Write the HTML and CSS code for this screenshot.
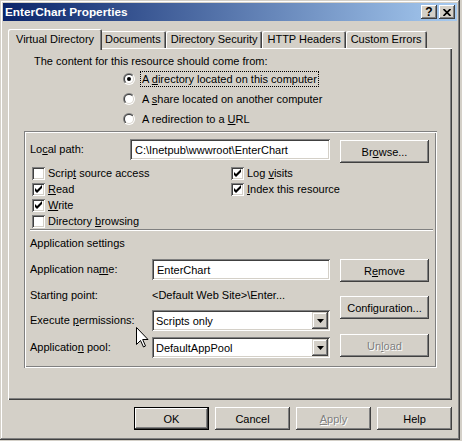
FILE: index.html
```html
<!DOCTYPE html>
<html lang="en">
<head>
  <meta charset="UTF-8">
  <meta name="viewport" content="width=device-width, initial-scale=1.0">
  <title>EnterChart Properties</title>
  <link rel="stylesheet" href="styles.css">
</head>
<body>
  <div class="dialog">
    <div class="titlebar">
      <span class="title">EnterChart Properties</span>
      <span class="capbtn">?</span>
      <span class="capbtn close">
        <svg width="8" height="7" viewBox="0 0 8 7"><path d="M0.5 0 L7.5 7 M7.5 0 L0.5 7" stroke="#000" stroke-width="1.7"/></svg>
      </span>
    </div>

    <div class="dialog-body">
      <div class="tabs">
        <div class="tab active">Virtual Directory</div>
        <div class="tab">Documents</div>
        <div class="tab">Directory Security</div>
        <div class="tab">HTTP Headers</div>
        <div class="tab">Custom Errors</div>
      </div>

      <div class="page">
        <p class="intro">The content for this resource should come from:</p>
        <div class="radios">
          <div class="radio-row">
            <svg class="radio" width="12" height="12" viewBox="0 0 12 12">
              <defs>
                <linearGradient id="outer" x1="0" y1="0" x2="1" y2="1"><stop offset="0.5" stop-color="#808080"/><stop offset="0.5" stop-color="#fff"/></linearGradient>
                <linearGradient id="inner" x1="0" y1="0" x2="1" y2="1"><stop offset="0.5" stop-color="#404040"/><stop offset="0.5" stop-color="#d4d0c8"/></linearGradient>
              </defs>
              <circle cx="6" cy="6" r="6" fill="url(#outer)"/>
              <circle cx="6" cy="6" r="5" fill="url(#inner)"/>
              <circle cx="6" cy="6" r="4" fill="#fff"/>
              <circle cx="6" cy="6" r="2" fill="#000"/>
            </svg>
            <span class="focus">A <u>d</u>irectory located on this computer</span>
          </div>
          <div class="radio-row">
            <svg class="radio" width="12" height="12" viewBox="0 0 12 12">
              <circle cx="6" cy="6" r="6" fill="url(#outer)"/>
              <circle cx="6" cy="6" r="5" fill="url(#inner)"/>
              <circle cx="6" cy="6" r="4" fill="#fff"/>
            </svg>
            <span class="radio-label">A <u>s</u>hare located on another computer</span>
          </div>
          <div class="radio-row">
            <svg class="radio" width="12" height="12" viewBox="0 0 12 12">
              <circle cx="6" cy="6" r="6" fill="url(#outer)"/>
              <circle cx="6" cy="6" r="5" fill="url(#inner)"/>
              <circle cx="6" cy="6" r="4" fill="#fff"/>
            </svg>
            <span class="radio-label">A redirection to a <u>U</u>RL</span>
          </div>
        </div>

        <div class="group">
          <div class="path-row">
            <span class="lbl path-lbl">Lo<u>c</u>al path:</span>
            <div class="edit path-edit">C:\Inetpub\wwwroot\EnterChart</div>
            <button class="btn side-btn">Br<u>o</u>wse...</button>
          </div>

          <div class="checks">
            <div class="check"><span class="box"></span><span>Scrip<u>t</u> source access</span></div>
            <div class="check"><span class="box on"><svg width="13" height="13" viewBox="0 0 13 13"><polygon points="3,5 5,7 10,2 10,5 5,10 3,8"/></svg></span><span>Log <u>v</u>isits</span></div>
            <div class="check"><span class="box on"><svg width="13" height="13" viewBox="0 0 13 13"><polygon points="3,5 5,7 10,2 10,5 5,10 3,8"/></svg></span><span><u>R</u>ead</span></div>
            <div class="check"><span class="box on"><svg width="13" height="13" viewBox="0 0 13 13"><polygon points="3,5 5,7 10,2 10,5 5,10 3,8"/></svg></span><span><u>I</u>ndex this resource</span></div>
            <div class="check"><span class="box on"><svg width="13" height="13" viewBox="0 0 13 13"><polygon points="3,5 5,7 10,2 10,5 5,10 3,8"/></svg></span><span><u>W</u>rite</span></div>
            <div></div>
            <div class="check"><span class="box"></span><span>Directory <u>b</u>rowsing</span></div>
          </div>

          <div class="sep"></div>
          <div class="section">Application settings</div>

          <div class="app">
            <div class="app-fields">
              <div class="field-row">
                <span class="lbl app-lbl">Application na<u>m</u>e:</span>
                <div class="edit app-edit">EnterChart</div>
              </div>
              <div class="field-row start-row">
                <span class="lbl app-lbl">Starting point:</span>
                <span>&lt;Default Web Site&gt;\Enter...</span>
              </div>
              <div class="field-row exec-row">
                <span class="lbl app-lbl">Execute <u>p</u>ermissions:</span>
                <div class="combo">
                  <span class="combo-text">Scripts only</span>
                  <span class="drop"><svg width="7" height="4" viewBox="0 0 7 4"><polygon points="0,0 7,0 3.5,4"/></svg></span>
                </div>
              </div>
              <div class="field-row pool-row">
                <span class="lbl app-lbl">Applicatio<u>n</u> pool:</span>
                <div class="combo">
                  <span class="combo-text">DefaultAppPool</span>
                  <span class="drop"><svg width="7" height="4" viewBox="0 0 7 4"><polygon points="0,0 7,0 3.5,4"/></svg></span>
                </div>
              </div>
            </div>
            <div class="app-buttons">
              <button class="btn side-btn">R<u>e</u>move</button>
              <button class="btn side-btn config-btn">Configuration...</button>
              <button class="btn side-btn unload-btn" disabled>Un<u>l</u>oad</button>
            </div>
          </div>
        </div>
      </div>

      <div class="actions">
        <button class="btn action default">OK</button>
        <button class="btn action">Cancel</button>
        <button class="btn action" disabled><u>A</u>pply</button>
        <button class="btn action">Help</button>
      </div>
    </div>

    <!-- mouse pointer resting over the form -->
    <svg class="pointer" width="13" height="21" viewBox="0 0 13 21">
      <path d="M0.5 0.5 L0.5 17.5 L4.5 13.5 L7.5 20 L9.5 19 L6.7 12.5 L12 12.5 Z" fill="#fff" stroke="#000" stroke-width="1"/>
    </svg>
  </div>
</body>
</html>
```

FILE: styles.css
```css
body {
  margin: 0;
  background-color: #d4d0c8;
  font-family: "Liberation Sans", Arial, sans-serif;
  font-size: 11px;
  color: #000;
}
u {
  text-underline-offset: 1px;
}
.dialog {
  position: relative;
  width: 460px;
  height: 440px;
  box-sizing: border-box;
  padding: 3px;
  background-color: #d4d0c8;
  box-shadow: inset -1px -1px #404040, inset 1px 1px #d4d0c8, inset -2px -2px #808080, inset 2px 2px #fff;
}

/* caption */
.titlebar {
  display: flex;
  align-items: center;
  height: 18px;
  padding: 0 2px;
  background: linear-gradient(to right, #0a246a, #a6caf0);
}
.title {
  flex: 1;
  color: #fff;
  font-weight: bold;
  font-size: 11.8px;
}
.capbtn {
  display: flex;
  align-items: center;
  justify-content: center;
  width: 16px;
  height: 14px;
  margin-left: 2px;
  font-weight: bold;
  font-size: 12px;
  background-color: #d4d0c8;
  box-shadow: inset -1px -1px #404040, inset 1px 1px #fff, inset -2px -2px #808080;
}

.dialog-body {
  padding: 8px 5px 0 5px;
}

/* tabs */
.tabs {
  display: flex;
  align-items: flex-end;
  height: 19px;
  padding-left: 2px;
}
.tab {
  height: 17px;
  line-height: 17px;
  padding: 0 5px;
  border-radius: 2px 2px 0 0;
  box-shadow: inset 1px 1px #fff, inset -1px 0 #404040, inset -2px 0 #808080;
}
.tab.active {
  position: relative;
  z-index: 1;
  height: 21px;
  line-height: 15px;
  box-sizing: border-box;
  padding: 3px 8px 0;
  margin: 0 -2px -2px;
  background-color: #d4d0c8;
}

/* property page */
.page {
  width: 444px;
  height: 352px;
  box-sizing: border-box;
  padding-top: 6px;
  box-shadow: inset 1px 1px #fff, inset -1px -1px #404040, inset -2px -2px #808080;
}
.intro {
  margin: 0 0 0 26px;
  line-height: 14px;
}
.radios {
  margin: 1px 0 0 115px;
}
.radio-row {
  display: flex;
  align-items: center;
  height: 20px;
  gap: 5px;
}
.radio-label {
  padding-left: 2px;
}
.focus {
  line-height: 14px;
  padding: 0 1px;
  border: 1px dotted #000;
}

/* etched frame round the path and application settings */
.group {
  width: 413px;
  height: 237px;
  box-sizing: border-box;
  margin: 2px 0 0 16px;
  padding: 8px 8px 0 6px;
  box-shadow: inset 1px 1px #808080, inset -1px -1px #fff, inset 2px 2px #fff, inset -2px -2px #808080;
}
.path-row {
  display: flex;
  align-items: flex-start;
  height: 24px;
}
.lbl {
  line-height: 21px;
}
.path-lbl {
  width: 100px;
}
.app-lbl {
  width: 122px;
}
.edit {
  height: 21px;
  box-sizing: border-box;
  padding-left: 5px;
  line-height: 22px;
  background-color: #fff;
  box-shadow: inset 1px 1px #808080, inset -1px -1px #fff, inset 2px 2px #404040, inset -2px -2px #d4d0c8;
  white-space: nowrap;
}
.path-edit {
  width: 200px;
}
.app-edit {
  width: 178px;
}

.btn {
  padding: 0;
  border: none;
  font-family: inherit;
  font-size: 11px;
  color: #000;
  background-color: #d4d0c8;
  box-shadow: inset -1px -1px #404040, inset 1px 1px #fff, inset -2px -2px #808080, inset 2px 2px #d4d0c8;
}
.btn:disabled {
  color: #808080;
  text-shadow: 1px 1px #fff;
}
.side-btn {
  width: 89px;
  height: 23px;
}
.path-row .side-btn {
  margin: 1px 0 0 10px;
}

.checks {
  display: grid;
  grid-template-columns: 199px auto;
  margin: 2px 0 0 2px;
}
.check {
  display: flex;
  align-items: center;
  gap: 3px;
  height: 16px;
}
.box {
  width: 13px;
  height: 13px;
  background-color: #fff;
  box-shadow: inset 1px 1px #808080, inset -1px -1px #fff, inset 2px 2px #404040, inset -2px -2px #d4d0c8;
}
.box svg {
  display: block;
}

.sep {
  margin-right: -4px;
  border-top: 1px solid #808080;
  border-bottom: 1px solid #fff;
}
.section {
  margin-top: 5px;
  line-height: 14px;
}

.app {
  display: flex;
  margin-top: 9px;
}
.app-fields {
  width: 300px;
}
.field-row {
  display: flex;
  align-items: center;
  height: 21px;
}
.start-row {
  height: 14px;
  margin-top: 8px;
}
.start-row .lbl {
  line-height: 14px;
}
.exec-row {
  margin-top: 8px;
}
.pool-row {
  margin-top: 6px;
}
.combo {
  display: flex;
  align-items: center;
  justify-content: space-between;
  width: 178px;
  height: 21px;
  box-sizing: border-box;
  padding: 2px;
  background-color: #fff;
  box-shadow: inset 1px 1px #808080, inset -1px -1px #fff, inset 2px 2px #404040, inset -2px -2px #d4d0c8;
}
.combo-text {
  padding-left: 2px;
}
.drop {
  display: flex;
  align-items: center;
  justify-content: center;
  width: 16px;
  height: 17px;
  background-color: #d4d0c8;
  box-shadow: inset -1px -1px #404040, inset 1px 1px #d4d0c8, inset -2px -2px #808080, inset 2px 2px #fff;
}
.app-buttons {
  display: flex;
  flex-direction: column;
  margin-left: 10px;
}
.config-btn {
  margin-top: 14px;
}
.unload-btn {
  margin-top: 15px;
}

/* OK / Cancel / Apply / Help */
.actions {
  display: flex;
  justify-content: flex-end;
  gap: 6px;
  margin-top: 7px;
}
.action {
  width: 75px;
  height: 23px;
}
.action.default {
  box-shadow: inset 0 0 0 1px #000, inset -2px -2px #404040, inset 2px 2px #fff, inset -3px -3px #808080;
}

.pointer {
  position: absolute;
  left: 136px;
  top: 327px;
}
```
